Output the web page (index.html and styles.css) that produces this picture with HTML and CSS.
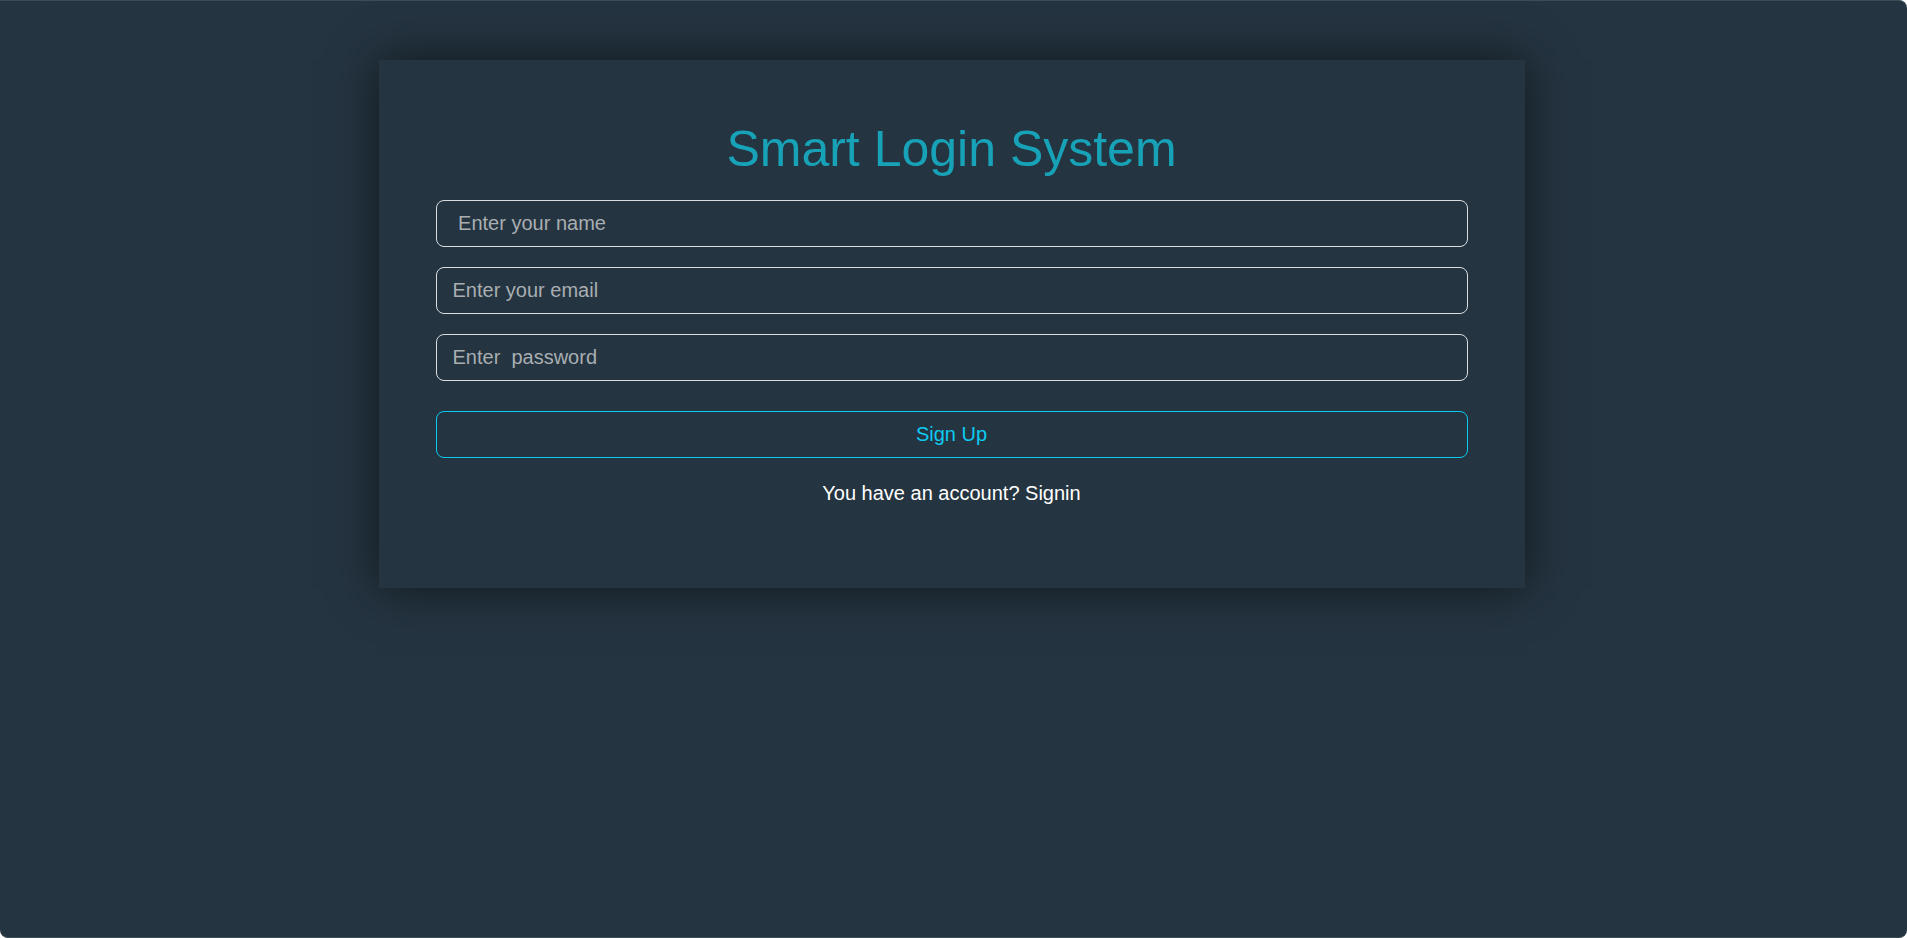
FILE: index.html
```html
<!DOCTYPE html>
<html lang="en">
<head>
<meta charset="utf-8">
<title>Smart Login System</title>
<link rel="stylesheet" href="styles.css">
</head>
<body>
<div class="frame">
  <main class="card">
    <h1 class="title">Smart Login System</h1>
    <form class="form">
      <input class="field" type="text" placeholder=" Enter your name">
      <input class="field" type="email" placeholder="Enter your email">
      <input class="field" type="password" placeholder="Enter  password">
      <button class="btn" type="button">Sign Up</button>
    </form>
    <p class="note">You have an account? <a class="link" href="#">Signin</a></p>
  </main>
</div>
</body>
</html>
```
FILE: styles.css
```css
* { box-sizing: border-box; }
html { background: #ffffff; }
body {
  margin: 0;
  font-family: "Liberation Sans", Arial, sans-serif;
}
.frame {
  height: 938px;
  background: #243440;
  border-radius: 0 8px 8px 8px;
  border-top: 1px solid #3c4c57;
  border-bottom: 1px solid #3c4c57;
  padding-top: 59px;
  overflow: hidden;
}
.card {
  width: 1146px;
  margin: 0 auto;
  position: relative;
  left: -2px;
  background: #243440;
  box-shadow: 0 0 45px rgba(0, 0, 0, 0.55);
  padding: 59px 57px 80px;
}
.title {
  margin: 0 0 21px;
  text-align: center;
  font-weight: 400;
  font-size: 50px;
  line-height: 60px;
  color: #17a2b8;
}
.form {
  display: flex;
  flex-direction: column;
  gap: 20px;
}
.field {
  display: block;
  width: 100%;
  height: 47px;
  padding: 0 16px;
  background: transparent;
  border: 1px solid #d8dde0;
  border-radius: 8px;
  font-family: inherit;
  font-size: 20px;
  color: #fff;
  outline: none;
}
.field::placeholder { color: #a9aeb2; opacity: 1; }
.btn {
  margin-top: 10px;
  height: 47px;
  width: 100%;
  background: transparent;
  border: 1px solid #0dcaf0;
  border-radius: 8px;
  color: #0dcaf0;
  font-family: inherit;
  font-size: 20px;
  cursor: pointer;
}
.note {
  margin: 20px 0 0;
  text-align: center;
  font-size: 20px;
  line-height: 30px;
  color: #ffffff;
}
.link { color: #ffffff; text-decoration: none; }
```
